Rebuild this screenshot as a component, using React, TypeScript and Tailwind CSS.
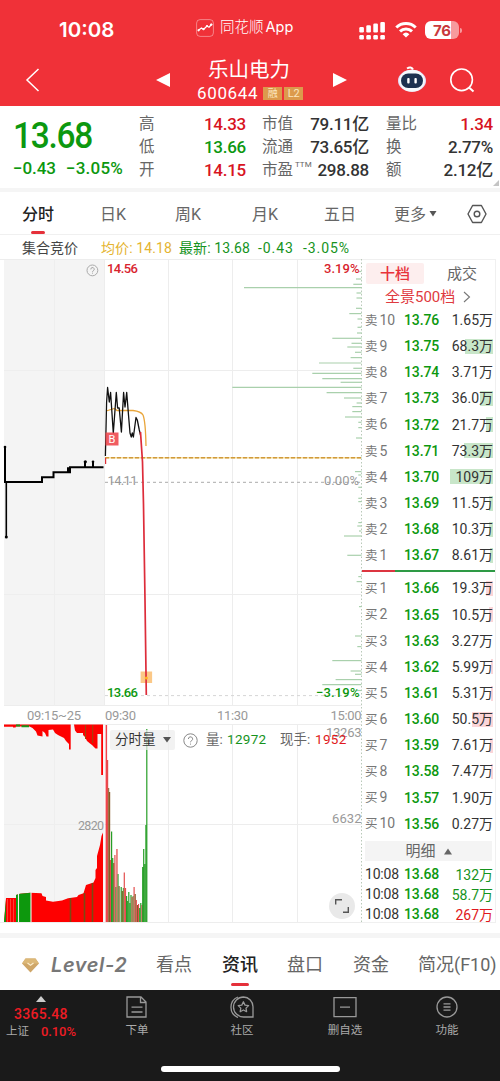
import clsx from 'clsx';

type Level = { label: string; n: number; price: string; vol: string; bar: number };

const ASKS: Level[] = [
  { label: '卖', n: 10, price: '13.76', vol: '1.65万', bar: 0 },
  { label: '卖', n: 9, price: '13.75', vol: '68.3万', bar: 28 },
  { label: '卖', n: 8, price: '13.74', vol: '3.71万', bar: 0 },
  { label: '卖', n: 7, price: '13.73', vol: '36.0万', bar: 13 },
  { label: '卖', n: 6, price: '13.72', vol: '21.7万', bar: 7 },
  { label: '卖', n: 5, price: '13.71', vol: '73.3万', bar: 29 },
  { label: '卖', n: 4, price: '13.70', vol: '109万', bar: 43 },
  { label: '卖', n: 3, price: '13.69', vol: '11.5万', bar: 4 },
  { label: '卖', n: 2, price: '13.68', vol: '10.3万', bar: 4 },
  { label: '卖', n: 1, price: '13.67', vol: '8.61万', bar: 3 },
];

const BIDS: Level[] = [
  { label: '买', n: 1, price: '13.66', vol: '19.3万', bar: 7 },
  { label: '买', n: 2, price: '13.65', vol: '10.5万', bar: 4 },
  { label: '买', n: 3, price: '13.63', vol: '3.27万', bar: 0 },
  { label: '买', n: 4, price: '13.62', vol: '5.99万', bar: 2 },
  { label: '买', n: 5, price: '13.61', vol: '5.31万', bar: 2 },
  { label: '买', n: 6, price: '13.60', vol: '50.5万', bar: 21 },
  { label: '买', n: 7, price: '13.59', vol: '7.61万', bar: 3 },
  { label: '买', n: 8, price: '13.58', vol: '7.47万', bar: 2 },
  { label: '买', n: 9, price: '13.57', vol: '1.90万', bar: 0 },
  { label: '买', n: 10, price: '13.56', vol: '0.27万', bar: 0 },
];

const TRADES = [
  { time: '10:08', price: '13.68', vol: '132万', up: false },
  { time: '10:08', price: '13.68', vol: '58.7万', up: false },
  { time: '10:08', price: '13.68', vol: '267万', up: true },
];

// [y, left edge] of each price level, right edge is the axis
const PROFILE: [number, number][] = [
  [271.5, 359], [279, 356], [284.3, 353.3], [287.6, 244], [293, 356.5], [298, 356.5], [308.3, 356], [313.6, 349.3],
  [319, 357.5], [327.3, 357.5], [333, 357], [338.3, 332.3], [343.3, 351.5], [347, 347.3], [352.3, 355], [357.6, 350.6],
  [363, 319], [368.3, 353.3], [373.3, 312.3], [378.6, 322.3], [382.3, 340.6], [387.3, 232.3], [392.6, 326.6],
  [398, 344], [403, 356.6], [406.6, 352.3], [411.6, 352.3], [417, 345], [422.3, 358.3], [427.6, 358.3], [438, 356],
  [457.6, 356.6], [471.6, 355], [475, 358.3], [487.3, 358.3], [498.3, 358.3], [501.6, 358.3], [522.6, 358.3],
  [526, 357.3], [531, 359], [536, 344], [555.3, 347.3], [576.6, 358.3], [581.6, 356.6], [606.6, 359], [636, 355],
  [646.6, 357.3], [660.6, 332.3], [671, 350.6], [674.3, 355], [679.6, 335.6], [684.6, 322.3], [690.5, 357],
];

const RED = '#e03c3c';
const BROWN = '#7b4a12';
const GREEN = '#109410';

// [x, width, top, colour]
const VOLUME: [number, number, number, string][] = [
  [105.6, 1.5, 725, '#f03038'], [107, 1.2, 760, RED], [108.2, 1, 788, BROWN], [109, 1.2, 792, BROWN],
  [110, 1.2, 860, RED], [111, 1.2, 831.5, GREEN], [112.1, 1.2, 858, GREEN], [113.2, 1.2, 863, BROWN],
  [114.3, 1.2, 855, RED], [115.4, 1, 887, GREEN], [116.3, 1.3, 849, RED], [117.6, 1, 874, GREEN],
  [118.6, 1.1, 886, BROWN], [120.6, 1.2, 887, GREEN], [121.7, 1.2, 891, BROWN], [122.8, 1, 888, GREEN],
  [123.7, 1.2, 872.5, RED], [124.9, 1.2, 888, RED], [126, 1.2, 896, GREEN], [127.1, 1.1, 901, GREEN],
  [128.2, 1.2, 892, GREEN], [129.3, 1.2, 903, GREEN], [130.4, 1.2, 895, GREEN], [131.5, 1.2, 897, RED],
  [132.6, 1, 896, GREEN], [133.5, 1.2, 887, RED], [134.7, 1.1, 894, BROWN], [135.8, 1.1, 900, RED],
  [136.9, 1.1, 905, BROWN], [138, 1.1, 904, RED], [139.1, 1.1, 908, GREEN], [140.2, 1.2, 903, GREEN],
  [141.4, 1.1, 905, RED], [142.1, 1.3, 867, GREEN], [143.1, 1.2, 849, GREEN], [144.2, 1.3, 864, GREEN],
  [145.3, 1.2, 825, GREEN], [146.2, 1.2, 729, GREEN],
];

const NAV = [
  { label: '下单', w: 'w-[90px]', icon: <OrderIcon /> },
  { label: '社区', w: 'w-[120px]', icon: <CommunityIcon /> },
  { label: '删自选', w: 'w-[86px]', icon: <RemoveIcon /> },
  { label: '功能', w: 'ml-[6px] w-[106px]', icon: <MenuIcon /> },
];

export default function App() {
  return (
    <div className="flex h-[1081px] w-[500px] flex-col overflow-hidden whitespace-nowrap bg-white font-['Roboto','Noto_Sans_CJK_SC',sans-serif] leading-none text-[#333]">
      <Header />
      <Quote />
      <Periods />
      <div className="flex h-6 shrink-0 items-center pl-[22px] pt-[2px] text-[14px]">
        <span className="w-[79px] text-[#444]">集合竞价</span>
        <span className="w-[78px] tracking-[0.1px] text-[#e5b431]">均价: 14.18</span>
        <span className="w-[79px] tracking-[0.1px] text-[#16931d]">最新: 13.68</span>
        <span className="w-[45px] tracking-[0.9px] text-[#16931d]">-0.43</span>
        <span className="tracking-[0.9px] text-[#16931d]">-3.05%</span>
      </div>
      <div className="flex h-[664px] shrink-0">
        <ChartArea />
        <OrderBook />
      </div>
      <div className="mt-[10px] h-[5px] shrink-0 bg-[#f5f5f5]" />
      <InfoTabs />
      <BottomNav />
    </div>
  );
}

function Header() {
  return (
    <header className="h-[106px] shrink-0 bg-[#f03138] text-white">
      <div className="flex h-[58px] items-center pl-[59px] pt-[2px]">
        <span className="w-[137px] font-['Inter'] text-[20.5px] font-semibold">10:08</span>
        <svg width="18" height="18" viewBox="0 0 18 18" fill="none" className="-mt-1">
          <rect x="0.6" y="0.6" width="16.8" height="16.8" rx="3.5" stroke="#fff" strokeOpacity="0.4" />
          <path d="M2 11.5 5.5 9l2 1.5L11 7l2 1.2L16 5" stroke="#fff" strokeWidth="1.3" />
          <circle cx="2.6" cy="11.3" r="1.1" fill="#fff" />
          <circle cx="7.5" cy="10.2" r="1.1" fill="#fff" />
          <circle cx="11" cy="7" r="1.1" fill="#fff" />
          <circle cx="15.2" cy="5.6" r="1.2" fill="#fff" />
        </svg>
        <span className="ml-[6px] -mt-1 w-[139px] text-[14.5px] font-light">
          同花顺<span className="ml-[2px] font-['Inter'] font-normal tracking-[0.1px]">App</span>
        </span>
        <SignalIcon />
        <svg width="22" height="16" viewBox="0 0 22 16" className="ml-[9px]" fill="none" stroke="#fff" strokeWidth="3">
          <path d="M1.3 5.5a14 14 0 0 1 19.4 0" />
          <path d="M5 9.3a8.7 8.7 0 0 1 12 0" />
          <path d="M11 15.6 7.6 12.2a5 5 0 0 1 6.8 0Z" fill="#fff" stroke="none" />
        </svg>
        <div className="ml-[8px] flex h-[18px] w-[34px] items-center justify-center rounded-[6px] bg-gradient-to-r from-white from-76% to-[#f79a9d] to-76% font-['Inter'] text-[15px] font-bold text-[#c9393d]">
          76
        </div>
        <div className="ml-[1px] h-[5px] w-[2px] rounded-r-full bg-[#f79a9d]" />
      </div>
      <div className="flex h-[44px] items-center pl-[25px]">
        <svg width="15" height="24" viewBox="0 0 15 24" fill="none" stroke="#fff" strokeWidth="1.5">
          <path d="M13.5 1 2 12l11.5 11" />
        </svg>
        <svg width="15" height="16" viewBox="0 0 15 16" fill="#fff" className="ml-[116px]">
          <path d="M0 8 14 1v14Z" />
        </svg>
        <div className="ml-[26px] flex w-[108px] flex-col pt-[2px]">
          <h1 className="pl-[11px] text-[20.5px]">乐山电力</h1>
          <div className="mt-[5px] flex items-center">
            <span className="text-[17px] tracking-[0.65px]">600644</span>
            <span className="ml-[5px] flex h-[13px] w-[19px] items-center justify-center bg-[#dc9a4c] text-[10px] text-[#fbe6bf]">融</span>
            <span className="ml-[2px] flex h-[13px] w-[19px] items-center justify-center bg-[#dc9a4c] text-[11px] text-[#fbe6bf]">L2</span>
          </div>
        </div>
        <svg width="15" height="16" viewBox="0 0 15 16" fill="#fff" className="ml-[28px]">
          <path d="M0 1v14L14 8Z" />
        </svg>
        <svg width="30" height="28" viewBox="0 0 30 28" className="ml-[49px] -mt-[2px]">
          <path d="M10 3.5q4-2.5 6 1" stroke="#fff" strokeWidth="2" fill="none" />
          <ellipse cx="15" cy="15.7" rx="14" ry="11" fill="#e4d9f5" />
          <ellipse cx="15" cy="15.7" rx="12.8" ry="11" fill="#f6fafd" />
          <rect x="4" y="8.5" width="22" height="14.5" rx="7.2" fill="#1d3150" />
          <rect x="10.2" y="13" width="2.4" height="5.6" rx="1" fill="#fff" />
          <rect x="17.4" y="13" width="2.4" height="5.6" rx="1" fill="#fff" />
        </svg>
        <svg width="25" height="25" viewBox="0 0 25 25" fill="none" stroke="#fff" strokeWidth="1.6" className="ml-[23px]">
          <circle cx="11.6" cy="11.8" r="10.8" />
          <path d="m19 19.5 4.5 4" strokeWidth="2" />
        </svg>
      </div>
    </header>
  );
}

function SignalIcon() {
  return (
    <svg width="27" height="19" viewBox="0 0 27 19" fill="#fff">
      {[0, 7, 14, 21].map((x, i) => (
        <g key={x}>
          <rect x={x + 0.3} y={6 - i * 1.7} width="4.6" height={5.5 + i * 1.7} rx="1.2" />
          <rect x={x + 0.3} y="14" width="4.6" height="4.4" rx="1.2" />
        </g>
      ))}
    </svg>
  );
}

function Quote() {
  return (
    <section className="flex h-[86px] shrink-0 border-b-[4px] border-[#f5f5f5] pl-[13px]">
      <div className="w-[126px] pt-[12px] font-medium text-[#0c980f]">
        <div className="origin-left scale-x-[0.93] text-[36px] tracking-[-1.4px]">13.68</div>
        <div className="mt-[6px] flex text-[17px]">
          <span className="w-[53px] tracking-[-0.1px]">−0.43</span>
          <span className="tracking-[0.2px]">−3.05%</span>
        </div>
      </div>
      <Column
        cls="w-[107px]"
        rows={[['高', '14.33', 'text-[#d8141f]'], ['低', '13.66', 'text-[#0c980f]'], ['开', '14.15', 'text-[#d8141f]']]}
      />
      <Column
        cls="ml-[16px] w-[107px]"
        rows={[['市值', '79.11亿', 'text-[#333]'], ['流通', '73.65亿', 'text-[#333]'], ['市盈', '298.88', 'text-[#333]']]}
        note="TTM"
      />
      <Column
        cls="ml-[17px] w-[107px]"
        rows={[['量比', '1.34', 'text-[#d8141f]'], ['换', '2.77%', 'text-[#333]'], ['额', '2.12亿', 'text-[#333]']]}
      />
      <svg width="6" height="6" viewBox="0 0 6 6" className="mb-[2px] self-end" fill="#c4c4c4">
        <path d="M6 0v6H0Z" />
      </svg>
    </section>
  );
}

function Column({ rows, cls, note }: { rows: string[][]; cls: string; note?: string }) {
  return (
    <div className={clsx('pt-[6px]', cls)}>
      {rows.map(([label, value, color], i) => (
        <div key={label} className="flex h-[23px] items-center justify-between">
          <span className="flex items-start pt-[3px] text-[15.5px] text-[#666]">
            {label}
            {note && i === 2 && <span className="-mr-5 -mt-[2px] ml-[2px] text-[8px]">{note}</span>}
          </span>
          <span className={clsx('pt-[1px] text-[17px] font-medium tracking-[-0.25px]', color)}>{value}</span>
        </div>
      ))}
    </div>
  );
}

function Periods() {
  return (
    <nav className="flex h-[43px] shrink-0 border-b border-[#f0f0f0] pl-[22px] text-[16px] text-[#666]">
      <div className="flex w-[78px] flex-col">
        <span className="mt-[15px] font-medium text-[#222]">分时</span>
        <span className="ml-[9px] mt-[8px] h-[3px] w-[14px] rounded-full bg-[#e5303a]" />
      </div>
      <span className="mt-[15px] w-[75px]">日K</span>
      <span className="mt-[15px] w-[77px]">周K</span>
      <span className="mt-[15px] w-[72px]">月K</span>
      <span className="mt-[15px] w-[70px]">五日</span>
      <span className="mt-[15px]">更多</span>
      <svg width="8" height="6" viewBox="0 0 8 6" fill="#555" className="ml-[3px] mt-[19px]">
        <path d="M0.5 0h7L4 5.5Z" />
      </svg>
      <svg width="20" height="20" viewBox="0 0 20 20" fill="none" stroke="#555" strokeWidth="1.4" className="ml-[30px] mt-[12px]">
        <path d="M5.6 1.5h8.8L19 10l-4.6 8.5H5.6L1 10Z" strokeLinejoin="round" />
        <circle cx="10" cy="10" r="2.8" />
      </svg>
    </nav>
  );
}

function ChartArea() {
  return (
    <div className="relative w-[362px] shrink-0">
      <Chart />
      <div className="absolute left-[110px] top-[471px] flex items-center text-[13.5px] text-[#666]">
        <div className="flex h-[20px] w-[65px] items-center rounded-[2px] bg-[#ececec]/70 pl-[5px] text-[#333]">
          分时量
          <svg width="8" height="6" viewBox="0 0 8 6" fill="#555" className="ml-[7px]">
            <path d="M0 0h8L4 5.5Z" />
          </svg>
        </div>
        <svg width="15" height="15" viewBox="0 0 15 15" fill="none" stroke="#888" className="ml-[8px]">
          <circle cx="7.5" cy="7.5" r="6.7" />
          <path d="M5.4 6a2.1 2.1 0 1 1 3.2 1.7q-1.1.6-1.1 1.6M7.5 10.6v1" />
        </svg>
        <span className="ml-[8px] w-[21px]">量:</span>
        <span className="w-[53px] tracking-[0.3px] text-[#16931d]">12972</span>
        <span className="w-[35px]">现手:</span>
        <span className="tracking-[0.3px] text-[#e01820]">1952</span>
      </div>
      <button className="absolute left-[329px] top-[634px] flex size-[26px] items-center justify-center rounded-full bg-[#e9e9e9]">
        <svg width="14" height="14" viewBox="0 0 14 14" fill="none" stroke="#555" strokeWidth="1.4">
          <path d="M0.7 5.5V0.7H7M13.3 8v5.3H8" />
        </svg>
      </button>
    </div>
  );
}

function Chart() {
  return (
    <svg width="362" height="664" viewBox="0 259 362 664" fill="none" className="block">
      <rect x="4" y="259" width="100.5" height="447" fill="#f4f4f4" />
      <rect x="4" y="724.5" width="100.5" height="198" fill="#f4f4f4" />
      <g stroke="#ededed">
        <path d="M0 259.5H362M104.5 370.5H362M104.5 594.5H362M4 705.5H362M4 724.5H362M104.5 824.5H362M0 922.5H362" />
        <path d="M4 370.5H104M4 594.5H104M54.5 259V706M54.5 725V922M4 824.5H104" stroke="#eeeeee" />
        <path d="M104.5 259V706M168.5 259V706M232.5 259V706M297.5 259V706M168.5 725V922M232.5 725V922M297.5 725V922" />
      </g>
      <path d="M361.5 259V922" stroke="#b9c9b9" strokeDasharray="1.5 2" />
      {PROFILE.map(([y, x]) => (
        <path key={y} d={`M${x} ${y}H361.5`} stroke="#a9d0ac" strokeWidth="1.2" />
      ))}

      <path d="M105 482.3H361" stroke="#aaa" strokeDasharray="3 3" />
      <path d="M105 457.7H361" stroke="#f7dd9c" strokeWidth="1.4" />
      <path d="M105 457.7H361" stroke="#d09a3c" strokeWidth="1.4" strokeDasharray="4 2" />
      <path d="M105 695.6H361" stroke="#d6d6d6" strokeDasharray="3 3" />

      {/* call auction */}
      <path d="M5 447V482H42V477.3H53.5V472.3H70V467.3H103.5M68 472V467.3M85 467V461.5M93 467V461.5" stroke="#000" strokeWidth="2" />
      <path d="M6.3 482V537" stroke="#000" strokeWidth="1.6" />
      <circle cx="5" cy="447" r="1.3" fill="#000" />
      <circle cx="6.3" cy="537" r="1.5" fill="#000" />
      <circle cx="85.3" cy="461.8" r="1.6" fill="#000" />
      <circle cx="93" cy="461.8" r="1.3" fill="#000" />

      {/* average, then price */}
      <path d="M106 411 114.5 408.5 117 410.5H133Q141 411.5 143 415 145.5 421 146 446" stroke="#e9a53a" strokeWidth="1.3" />
      <path
        d="M105.4 456 106.6 402 107.6 387.5 109.3 402 110.6 392.5 113.3 433 116.3 392.5 117.6 408 119.2 408 121.4 432 123.6 392.5 125 407 126.7 392.5 128.5 415 130 433 131.3 437 132.3 433 133.4 437 136 417.5 137.3 420 139.3 430 140.5 435"
        stroke="#111"
        strokeWidth="1.3"
        strokeLinejoin="round"
      />
      <path d="M105.6 458V464" stroke="#e03038" strokeWidth="1.2" />
      <rect x="105.5" y="432.5" width="13" height="13" fill="#ee4a50" fillOpacity="0.9" />
      <text x="112" y="443" textAnchor="middle" fontSize="11" fill="#fff">B</text>
      <rect x="140.6" y="671.5" width="11.5" height="11.5" fill="#fbc27a" fillOpacity="0.9" />
      <path d="M140.5 432 142.5 462 143.5 505 145 600 146.3 695" stroke="#dd2c3a" strokeWidth="1.7" />
      <circle cx="146.3" cy="678" r="1.6" fill="#ffb020" />

      <g fontSize="13" fontWeight="500">
        <text x="107" y="272.6" textLength="31" fill="#d8242e">14.56</text>
        <text x="324" y="272.6" textLength="35.5" fill="#d8242e">3.19%</text>
        <text x="107" y="696.7" textLength="31" fill="#0c980f">13.66</text>
        <text x="316" y="696.7" textLength="43.5" fill="#0c980f">−3.19%</text>
      </g>
      <g fontSize="13" fill="#999">
        <text x="107.5" y="484.7" textLength="30">14.11</text>
        <text x="324" y="484.7" textLength="35">0.00%</text>
        <text x="27" y="720" textLength="54">09:15~25</text>
        <text x="105" y="719.5" textLength="31">09:30</text>
        <text x="217" y="719.5" textLength="31">11:30</text>
        <text x="330.5" y="719.5" textLength="31">15:00</text>
        <text x="326" y="736.5" textLength="35.5">13263</text>
        <text x="332" y="823" textLength="29.5">6632</text>
        <text x="78" y="829.5" fontSize="12.5" textLength="26">2820</text>
      </g>
      <circle cx="92.4" cy="270.4" r="5.4" stroke="#aaa" />
      <path d="M90.8 269.4a1.7 1.7 0 1 1 2.6 1.3q-.9.5-.9 1.2M92.5 272.7v.9" stroke="#999" strokeWidth="0.9" />

      {/* auction: unmatched volume from the top, matched from the bottom */}
      <path
        d="M4 724.5H70.7V749.5H69V744L66 741 64 738 61 736.5 58 735 55 733 53 729.5 48.5 730V736.5H46.5L45 733 42.5 731V736.5L37.5 735.5 36 731.5 32.5 728 29.5 726.5H16L15.5 727.5H13V726.8H4Z"
        fill="#fe0000"
      />
      <path d="M74 724.5H103V775H101.2V734H97.5V748.5H95.5L92 745 90 743.5 87 741 85 737 83 735V733H80L77 733 75 730.5Z" fill="#fe0000" />
      <path d="M16 725.5H20M21.5 726.2H29" stroke="#19951a" strokeWidth="2" />
      <path d="M85.5 725V739M92.7 725V743" stroke="#9b4a0c" />
      <path
        d="M4 922 6 898H16V895L20 893.8 30 892.7 41.5 893.3 42.5 896 46 897V900.5L53 901.7 62 900.5 68 898.3 77 897 78.5 895 83.5 893.3 86 885 93.5 882.5 95.5 878V870L97 868V856L100 845 101.5 836 103 832.5V922Z"
        fill="#fe0000"
      />
      <path d="M16 922V895L20 893.8 31 892.8V922ZM4 922 6 900V922Z" fill="#0d980d" />
      <path d="M18.5 893V922M31 892V922" stroke="#f4f4f4" strokeWidth="1.1" />
      <path d="M7.5 899V922M10.5 899V922M13.5 899V922" stroke="#ff7a6a" strokeWidth="0.5" />
      <path d="M70.5 898V922M84.5 893V922M92.5 883V922" stroke={BROWN} strokeWidth="1.6" />

      {VOLUME.map(([x, w, top, color]) => (
        <rect key={x} x={x} y={top} width={w} height={922 - top} fill={color} fillOpacity="0.9" />
      ))}
    </svg>
  );
}

function OrderBook() {
  return (
    <aside className="w-[134px] shrink-0 border-b border-t border-r border-[#f0f0f0]">
      <div className="mt-[3px] flex h-[21px] items-center text-[15px]">
        <span className="ml-[4px] flex h-[21px] w-[58px] items-center justify-center rounded-[2px] bg-[#fdeeee] pt-[1px] font-medium text-[#e8323a]">十档</span>
        <span className="ml-[23px] pt-[1px] text-[#666]">成交</span>
      </div>
      <div className="flex h-[24px] items-center pl-[23px] pt-[2px] text-[15px] text-[#df3a40]">
        全景500档
        <svg width="8" height="12" viewBox="0 0 8 12" fill="none" stroke="#777" strokeWidth="1.1" className="ml-[8px]">
          <path d="m1 1 5.5 5L1 11" />
        </svg>
      </div>
      <div className="-mt-[1px]">
        {ASKS.map(l => <LevelRow key={l.n} level={l} barColor="bg-[#c8e6c9]" />)}
      </div>
      <div className="mb-[3px] mt-[2px] flex h-[2px]">
        <span className="w-[33px] bg-[#dc3540]" />
        <span className="w-[100px] bg-[#2e9a45]" />
      </div>
      <div>
        {BIDS.map(l => <LevelRow key={l.n} level={l} barColor="bg-[#fbd5d8]" />)}
      </div>
      <div className="ml-[3px] mt-[4px] flex h-[20px] w-[127px] items-center justify-center bg-[#f4f4f4] pt-[2px] text-[15px] text-[#666]">
        明细
        <svg width="8" height="7" viewBox="0 0 8 7" fill="#666" className="ml-[8px]">
          <path d="M0 6.5h8L4 0.5Z" />
        </svg>
      </div>
      <div className="mt-[3px]">
        {TRADES.map((t, i) => (
          <div key={i} className="flex h-[20px] items-center pl-[3px] pt-[1px] text-[14px]">
            <span className="w-[39px] tracking-[-0.2px]">{t.time}</span>
            <span className="w-[36px] font-medium tracking-[-0.1px] text-[#0c980f]">{t.price}</span>
            <span className={clsx('w-[53px] pt-[1px] text-right', t.up ? 'text-[#e01820]' : 'text-[#16931d]')}>{t.vol}</span>
          </div>
        ))}
      </div>
    </aside>
  );
}

function LevelRow({ level, barColor }: { level: Level; barColor: string }) {
  return (
    <div className="flex h-[26.15px] items-center pl-[3px] text-[14px]">
      <span className="w-[39px] text-[#777]">
        <span className="mr-[2px] text-[12.5px]">{level.label}</span>
        <span className="tracking-[-0.2px]">{level.n}</span>
      </span>
      <span className="w-[36px] font-medium tracking-[-0.1px] text-[#0c980f]">{level.price}</span>
      <span className="relative flex h-[15px] w-[53px] items-center justify-end">
        <span className={clsx('absolute inset-y-0 right-0', barColor)} style={{ width: level.bar }} />
        <span className="relative">{level.vol}</span>
      </span>
    </div>
  );
}

function InfoTabs() {
  return (
    <nav className="flex h-[52px] shrink-0 items-center pl-[22px] pt-[2px] text-[18px] text-[#666]">
      <svg width="17" height="15" viewBox="0 0 17 15" className="mr-[12px]">
        <path d="M3.5 0.5h10L17 5.5 8.5 14.5 0 5.5Z" fill="#cfa668" />
        <path d="M3.5 0.5h10L17 5.5H0Z" fill="#dcb878" />
        <path d="m5.5 5 3 2.2L11.5 5" stroke="#fbeccb" strokeWidth="1.3" fill="none" />
      </svg>
      <span className="w-[105px] font-['Inter'] text-[20px] font-semibold italic tracking-[0.6px] text-[#777]">Level-2</span>
      <span className="w-[66px]">看点</span>
      <span className="relative w-[65px] font-medium text-[#222]">
        资讯
        <span className="absolute -bottom-[12px] left-[9px] h-[3.5px] w-[18px] rounded-full bg-[#e5303a]" />
      </span>
      <span className="w-[66px]">盘口</span>
      <span className="w-[65px]">资金</span>
      <span>简况(F10)</span>
    </nav>
  );
}

function BottomNav() {
  return (
    <footer className="flex h-[91px] shrink-0 flex-col bg-[#1a1a1a] text-[#aaa]">
      <div className="flex h-[76px]">
        <div className="flex w-[92px] flex-col pt-[6px]">
          <svg width="10" height="6" viewBox="0 0 10 6" fill="#ccc" className="ml-[36px]">
            <path d="M0 6h10L5 0Z" />
          </svg>
          <span className="ml-[14px] mt-[5px] text-[14px] font-medium tracking-[0.3px] text-[#ee1c24]">3365.48</span>
          <span className="mt-[4px] flex items-center pl-[6px] text-[11.5px]">
            <span className="w-[35px] pt-[1px]">上证</span>
            <span className="text-[13px] font-medium tracking-[-0.1px] text-[#ee1c24]">0.10%</span>
          </span>
        </div>
        {NAV.map(n => (
          <div key={n.label} className={clsx('flex flex-col items-center pt-[6px]', n.w)}>
            {n.icon}
            <span className="mt-[7px] text-[11.5px]">{n.label}</span>
          </div>
        ))}
      </div>
      <div className="ml-[161px] h-[6px] w-[179px] rounded-full bg-white" />
    </footer>
  );
}

function OrderIcon() {
  return (
    <svg width="22" height="22" viewBox="0 0 22 22" fill="none" stroke="#999" strokeWidth="1.3">
      <path d="M1 1h14l5 5v15H1ZM14.5 1v5.5H20M5.5 11.2h11M5.5 16h11" />
    </svg>
  );
}

function CommunityIcon() {
  return (
    <svg width="24" height="22" viewBox="0 0 24 22" fill="none" stroke="#999" strokeWidth="1.3">
      <path d="M13.5 1A9.7 9.7 0 1 0 13.5 21H23V10.8A9.7 9.7 0 0 0 13.5 1Z" />
      <path d="M8 1A11 11 0 0 0 8 21.5" />
      <path d="m13.4 5.8 1.6 3.3 3.6.5-2.6 2.5.6 3.6-3.2-1.7-3.2 1.7.6-3.6-2.6-2.5 3.6-.5Z" strokeLinejoin="round" />
    </svg>
  );
}

function RemoveIcon() {
  return (
    <svg width="24" height="22" viewBox="0 0 24 22" fill="none" stroke="#999" strokeWidth="1.3">
      <path d="M1 1.7h22v19H1ZM7 11.2h10" />
    </svg>
  );
}

function MenuIcon() {
  return (
    <svg width="22" height="22" viewBox="0 0 22 22" fill="none" stroke="#999" strokeWidth="1.3">
      <circle cx="11" cy="11" r="10" />
      <path d="M7.5 7.8h7M7.5 11h7M7.5 14.2h7" />
    </svg>
  );
}
